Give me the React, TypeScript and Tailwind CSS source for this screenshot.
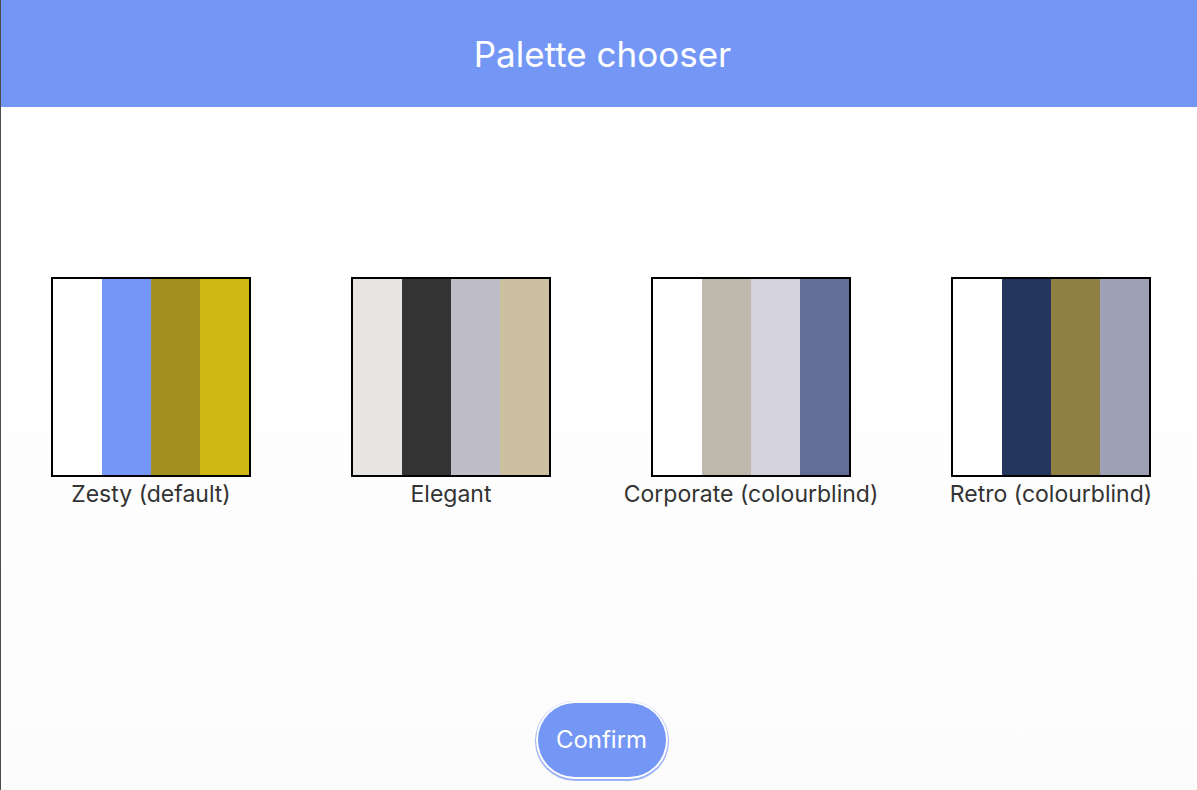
import React from "react";

const palettes: { name: string; colors: string[] }[] = [
  { name: "Zesty (default)", colors: ["#ffffff", "#7496f6", "#a38f1e", "#d0b814"] },
  { name: "Elegant", colors: ["#e8e4e4", "#333333", "#bebcc6", "#cbc09f"] },
  { name: "Corporate (colourblind)", colors: ["#ffffff", "#bfb8ac", "#d3d2de", "#626e96"] },
  { name: "Retro (colourblind)", colors: ["#ffffff", "#24355e", "#8e8042", "#9ea0b5"] },
];

export default function App() {
  return (
    <div
      className="w-[1197px] h-[790px] overflow-hidden flex flex-col border-l border-[#4d4d4d] bg-linear-to-b from-white from-30% to-[#fcfcfc]"
      style={{ fontFamily: "Inter, 'Noto Sans', sans-serif" }}
    >
      <header className="h-[107px] shrink-0 bg-[#7497f6] flex items-center justify-center pl-[7px]">
        <h1 className="text-white text-[35px] leading-none font-normal pt-[1px]">Palette chooser</h1>
      </header>
      <main className="flex-1 flex flex-col">
        <div className="flex pt-[170px]">
          {palettes.map((p) => (
            <div key={p.name} className="w-[300px] shrink-0 flex flex-col items-center">
              <div className="w-[200px] h-[200px] border-2 border-black flex">
                {p.colors.map((c, i) => (
                  <div key={i} className="flex-1" style={{ backgroundColor: c }} />
                ))}
              </div>
              <div className="mt-[4px] text-[23px] leading-[26px] text-[#333333] whitespace-nowrap">{p.name}</div>
            </div>
          ))}
        </div>
        <div className="flex-1 flex items-end justify-center pb-[13px] pl-[5px]">
          <button className="w-[128px] h-[74px] rounded-full bg-[#7497f6] text-white text-[24px] shadow-[0_0_0_2px_#ffffff,0_1px_0_3px_#9db2f6]">
            Confirm
          </button>
        </div>
      </main>
    </div>
  );
}
